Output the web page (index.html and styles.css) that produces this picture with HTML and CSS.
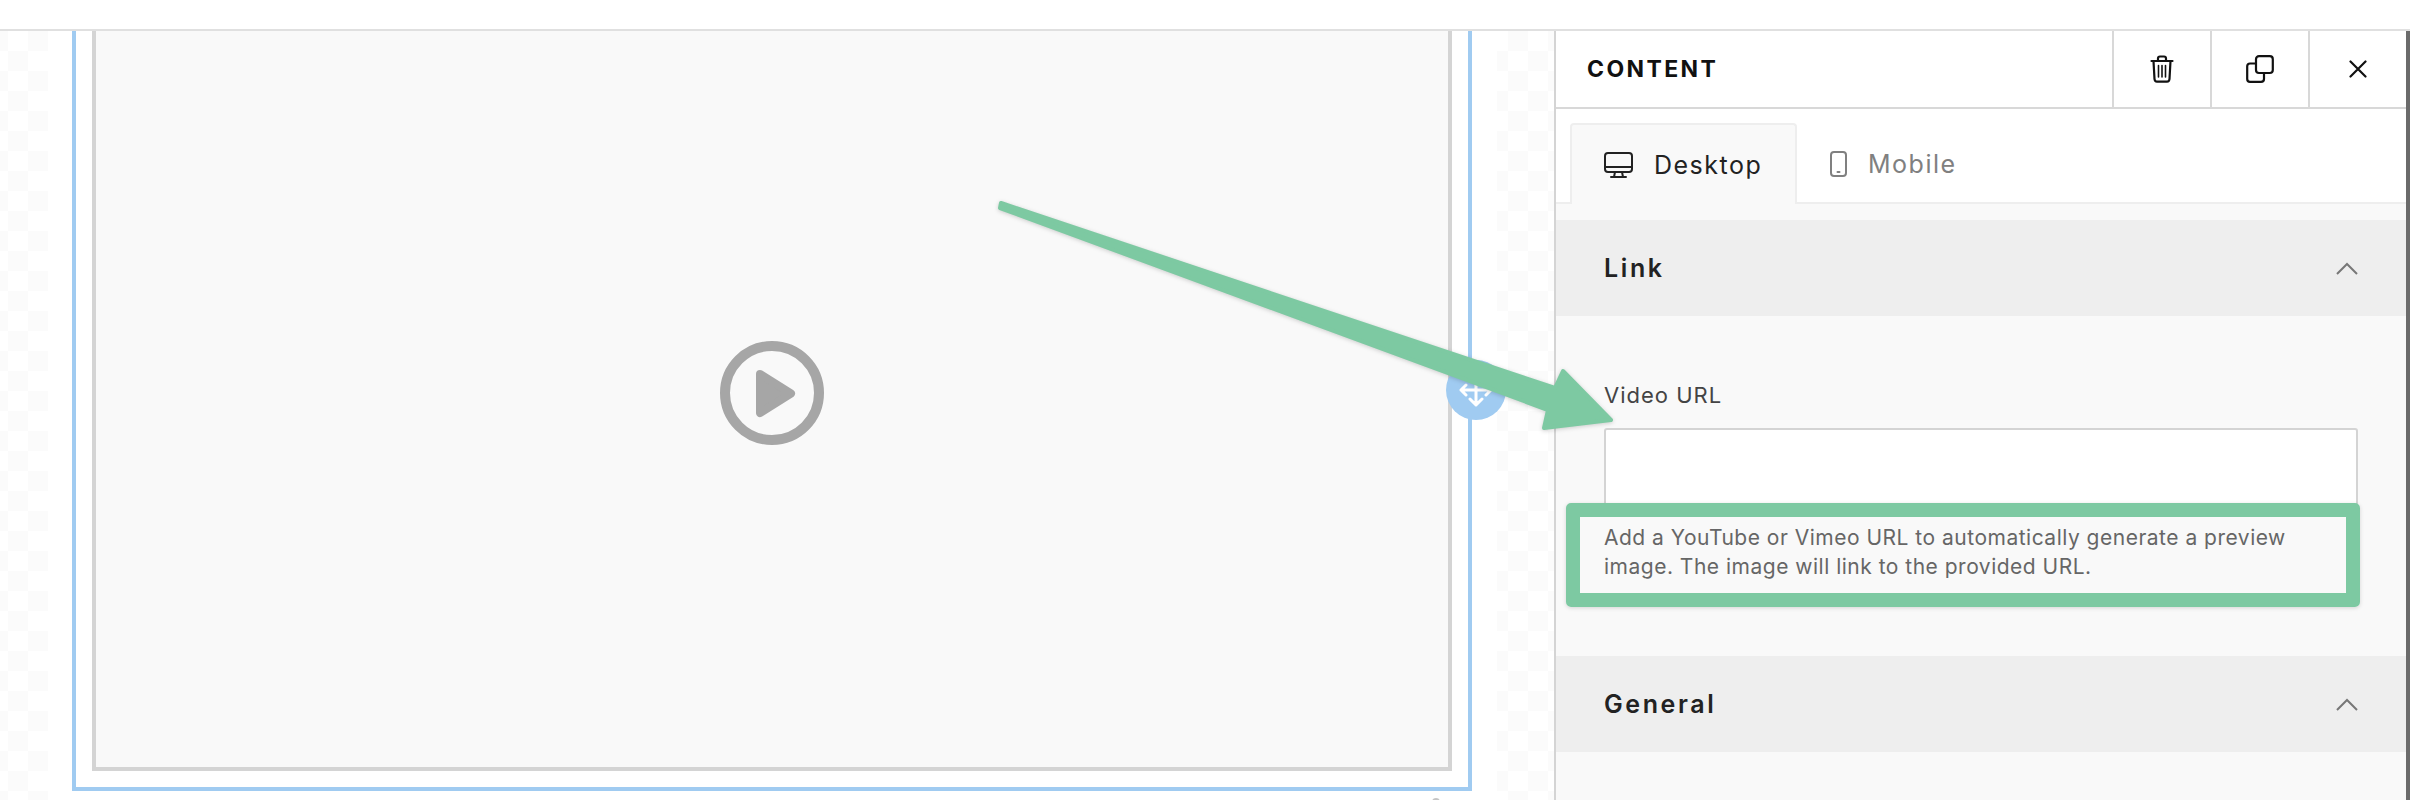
FILE: index.html
```html
<!DOCTYPE html>
<html lang="en">
<head>
  <meta charset="UTF-8">
  <title>Content editor</title>
  <link rel="stylesheet" href="styles.css">
</head>
<body>

  <div class="topbar"></div>

  <div class="workspace">
    <div class="stage">
      <div class="page-frame">
        <div class="block-outline">
          <div class="video-block">
            <svg class="play-icon" viewBox="0 0 104 104" width="104" height="104">
              <circle cx="52" cy="52" r="47" fill="none" stroke="#a6a6a6" stroke-width="10"/>
              <path d="M40 33 L71 52.5 L40 72 Z" fill="#a6a6a6" stroke="#a6a6a6" stroke-width="8" stroke-linejoin="round"/>
            </svg>
          </div>
        </div>
        <div class="move-handle">
          <svg viewBox="0 0 34 34" width="34" height="34" fill="none" stroke="#fff" stroke-width="3" stroke-linecap="round" stroke-linejoin="round">
            <path d="M17 4 V32 M2 17 H32 M7 12 L2 17 L7 22 M27 12 L32 17 L27 22 M11 26 L17 32 L23 26"/>
          </svg>
        </div>
        <span class="stray-dot"></span>
      </div>
    </div>

    <aside class="panel">
      <header class="panel-head">
        <h2>CONTENT</h2>
        <button class="head-btn">
          <svg viewBox="0 0 24 28" width="24" height="28" fill="none" stroke="#111" stroke-width="2.2" stroke-linecap="round" stroke-linejoin="round">
            <path d="M1.5 6 H22.5 M8 5.5 V3.5 Q8 1.5 10 1.5 H14 Q16 1.5 16 3.5 V5.5 M3.5 6 L4.5 24 Q4.7 26.6 7 26.6 H17 Q19.3 26.6 19.5 24 L20.5 6"/>
            <path d="M8.5 10.5 V22 M12 10.5 V22 M15.5 10.5 V22" stroke-width="1.6"/>
          </svg>
        </button>
        <button class="head-btn">
          <svg viewBox="0 0 28 28" width="28" height="28" fill="none" stroke="#111" stroke-width="2.2" stroke-linejoin="round">
            <rect x="10" y="1.2" width="16.8" height="16.8" rx="3"/>
            <path d="M10 8.5 H4 Q1.2 8.5 1.2 11.3 V24 Q1.2 26.8 4 26.8 H15 Q18 26.8 18 24 V18"/>
          </svg>
        </button>
        <button class="head-btn">
          <svg viewBox="0 0 18 18" width="18" height="18" fill="none" stroke="#111" stroke-width="2.2" stroke-linecap="round">
            <path d="M1.5 1.5 L16.5 16.5 M16.5 1.5 L1.5 16.5"/>
          </svg>
        </button>
      </header>

      <div class="tabs">
        <div class="tab active">
          <svg viewBox="0 0 29 26" width="29" height="26" fill="none" stroke="#222" stroke-width="2" stroke-linejoin="round" stroke-linecap="round">
            <rect x="1" y="1" width="27" height="19" rx="3"/>
            <path d="M1 15 H28 M11 20 L10 25 M18 20 L19 25 M7 25 H22"/>
          </svg>
          Desktop
        </div>
        <div class="tab">
          <svg viewBox="0 0 17 26" width="17" height="26" fill="none" stroke="#808080" stroke-width="2" stroke-linecap="round">
            <rect x="1" y="1" width="15" height="24" rx="3"/>
            <path d="M7.5 21 H9.5"/>
          </svg>
          Mobile
        </div>
      </div>

      <div class="panel-body">
        <section>
          <div class="section-head">
            <h3>Link</h3>
            <svg class="chevron" viewBox="0 0 22 13" width="22" height="13"><path d="M1 12 L11 2 L21 12"/></svg>
          </div>
          <div class="section-body">
            <label class="field-label">Video URL</label>
            <div class="text-input"></div>
            <p class="help">Add a YouTube or Vimeo URL to automatically generate a preview image. The image will link to the provided URL.</p>
          </div>
        </section>
        <section>
          <div class="section-head">
            <h3>General</h3>
            <svg class="chevron" viewBox="0 0 22 13" width="22" height="13"><path d="M1 12 L11 2 L21 12"/></svg>
          </div>
        </section>
      </div>
    </aside>

    <div class="window-edge"></div>
  </div>

  <!-- annotation drawn on top of the screenshot -->
  <div class="callout-box"></div>
  <svg class="callout-arrow" viewBox="0 0 2410 800" width="2410" height="800">
    <path d="M1001 203 L1555 388 L1563 371 L1611 420 L1544 428 L1548 410 L1000 208 Z" fill="#7dc9a2" stroke="#7dc9a2" stroke-width="4" stroke-linejoin="round"/>
  </svg>

</body>
</html>
```

FILE: styles.css
```css
/* Base */
* {
  margin: 0;
  padding: 0;
  box-sizing: border-box;
}

html, body {
  height: 800px;
  overflow: hidden;
}

body {
  position: relative;
  font-family: Inter, sans-serif;
  background-color: #fff;
  color: #222;
}

.topbar {
  height: 31px;
  border-bottom: 2px solid #e0e0e0;
}

.workspace {
  display: flex;
  height: 769px;
}

/* Canvas side */
.stage {
  width: 1554px;
  padding: 0 57px 0 48px;
  background-color: #fff;
  background-image: conic-gradient(#fbfbfb 25%, #fff 0 50%, #fbfbfb 0 75%, #fff 0);
  background-size: 40px 40px;
  background-position: 8px 0;
}

.page-frame {
  position: relative;
  height: 100%;
  padding: 0 25px 0 24px;
  background-color: #fff;
}

.block-outline {
  height: 760px;
  padding: 0 16px 16px;
  border: 4px solid #a0cbf1;
  border-top: none;
}

.video-block {
  display: flex;
  align-items: center;
  justify-content: center;
  height: 740px;
  padding-bottom: 13px;
  background-color: #f9f9f9;
  border: 4px solid #d4d4d4;
  border-top: none;
}

.play-icon {
  display: block;
}

.move-handle {
  position: absolute;
  left: 1398px;
  top: 329px;
  display: flex;
  align-items: center;
  justify-content: center;
  width: 60px;
  height: 60px;
  border-radius: 50%;
  background-color: #a0cbf1;
}

.stray-dot {
  position: absolute;
  left: 1384px;
  top: 767px;
  width: 8px;
  height: 8px;
  border-radius: 50%;
  background-color: #c4c4c4;
}

/* Right panel */
.panel {
  width: 852px;
  border-left: 2px solid #d4d4d4;
  background-color: #fff;
}

.window-edge {
  width: 4px;
  background-color: #6b6b6b;
}

.panel-head {
  display: flex;
  align-items: center;
  height: 78px;
  border-bottom: 2px solid #d8d8d8;
}

.panel-head h2 {
  flex: 1;
  padding-left: 31px;
  font-size: 23px;
  font-weight: 700;
  letter-spacing: 2.4px;
  color: #111;
}

.head-btn {
  display: flex;
  align-items: center;
  justify-content: center;
  width: 98px;
  height: 76px;
  background: none;
  border: none;
  border-left: 2px solid #d8d8d8;
}

/* Tabs */
.tabs {
  display: flex;
  height: 95px;
  padding: 14px 0 0 14px;
  border-bottom: 2px solid #eee;
}

.tab {
  display: flex;
  align-items: center;
  gap: 21px;
  width: 227px;
  height: 81px;
  padding-left: 33px;
  font-size: 25px;
  letter-spacing: 1.5px;
  color: #808080;
}

.tab.active {
  padding-left: 32px;
  background-color: #f9f9f9;
  border: 2px solid #eee;
  border-bottom: none;
  border-radius: 4px 4px 0 0;
  color: #222;
}

.panel-body {
  height: 596px;
  padding-top: 16px;
  background-color: #f9f9f9;
}

.section-head {
  display: flex;
  align-items: center;
  justify-content: space-between;
  height: 96px;
  padding: 0 48px;
  background-color: #eee;
}

.section-head h3 {
  font-size: 25px;
  font-weight: 600;
  letter-spacing: 2.6px;
}

.chevron {
  fill: none;
  stroke: #777;
  stroke-width: 2;
}

.section-body {
  padding: 65px 48px 75px;
}

.field-label {
  display: block;
  font-size: 22px;
  line-height: 28px;
  letter-spacing: 1px;
  color: #444;
}

.text-input {
  height: 82px;
  margin-top: 19px;
  background-color: #fff;
  border: 2px solid #d4d4d4;
  border-radius: 3px;
}

.help {
  margin-top: 13px;
  font-size: 21px;
  line-height: 29px;
  letter-spacing: 0.5px;
  color: #666;
}

/* Annotation */
.callout-box {
  position: absolute;
  left: 1566px;
  top: 503px;
  width: 794px;
  height: 104px;
  border: 14px solid #7dc9a2;
  border-radius: 5px;
  box-shadow: 0 1px 4px rgba(0,0,0,0.15);
}

.callout-arrow {
  position: absolute;
  left: 0;
  top: 0;
  filter: drop-shadow(0 1px 2px rgba(0,0,0,0.18));
}
```
